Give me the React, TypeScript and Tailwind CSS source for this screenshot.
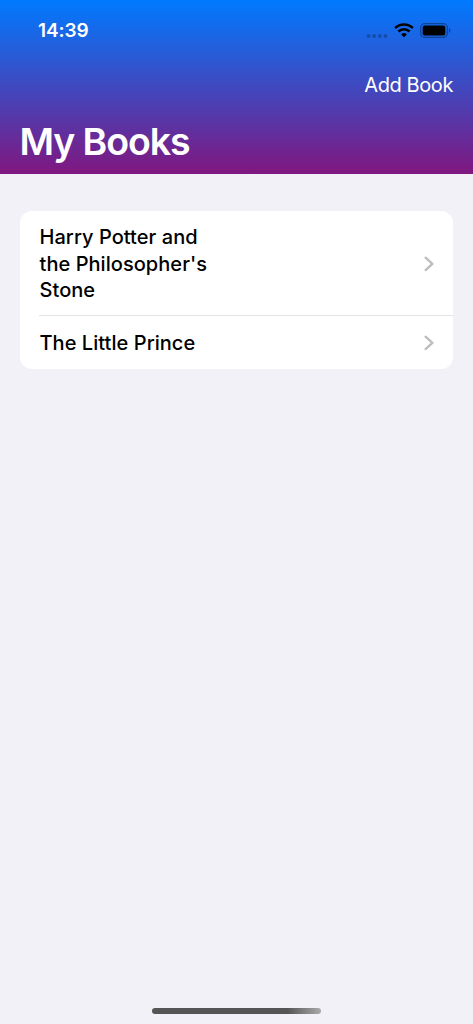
export default function App() {
  return (
    <div className="flex h-[1024px] w-full flex-col overflow-hidden bg-[#f2f1f7] font-['Inter',sans-serif]">
      <header className="flex h-[174px] flex-col bg-linear-to-b/srgb from-[#007aff] to-[#80177f] text-white">
        <div className="flex h-[61px] items-center justify-between pr-[22px] pl-[38px]">
          <span className="text-[19px] leading-none font-semibold tracking-[-0.1px]">14:39</span>
          <div className="flex items-center">
            <svg width="22" height="6" viewBox="0 0 22 6" className="mt-[10px] mr-[6px]" fill="#000" fillOpacity="0.24">
              <circle cx="2.5" cy="3" r="2" /><circle cx="8.1" cy="3" r="2" /><circle cx="13.8" cy="3" r="2" /><circle cx="19.4" cy="3" r="2" />
            </svg>
            <svg width="20" height="15" viewBox="0 0 20 15" fill="none" stroke="#000" strokeWidth="2.6">
              <path d="M1.2 5a12.8 12.8 0 0 1 17.6 0" /><path d="M4.4 8.5a8 8 0 0 1 11.2 0" /><path d="M10 14.2 7.2 11.4a4 4 0 0 1 5.6 0Z" fill="#000" stroke="none" />
            </svg>
            <svg width="31" height="15" viewBox="0 0 31 15" className="ml-[6px]">
              <rect x=".7" y=".7" width="26.6" height="13.6" rx="4" fill="none" stroke="#000" strokeOpacity=".36" strokeWidth="1.2" /><rect x="2.7" y="2.6" width="22.6" height="9.8" rx="2" /><path d="M29 5v5c1.8-.8 1.8-4.2 0-5Z" fillOpacity=".42" />
            </svg>
          </div>
        </div>
        <div className="flex h-[46px] items-center justify-end pt-0.5 pr-5">
          <button className="text-[20px] leading-none tracking-[-0.4px]">Add Book</button>
        </div>
        <h1 className="pt-[14px] pl-[19.5px] text-[37.5px] leading-[41px] font-semibold tracking-[-1.1px]">My Books</h1>
      </header>
      <main className="px-5 pt-[37px]">
        <ul className="overflow-hidden rounded-[12px] bg-white text-[20px] leading-[26.6px] font-medium text-black">
          <li className="flex h-[104px] items-center justify-between pt-px pr-[19px] pl-[19.5px]">
            <span className="pt-[1px] tracking-[0.05px]">Harry Potter and<br />the Philosopher's<br />Stone</span>
            <Chevron />
          </li>
          <li className="ml-[19px] flex h-[54px] items-center justify-between border-t border-[#e3e3e5] pr-[19px] pl-[.5px]">
            <span className="pt-[2px] tracking-[0.05px]">The Little Prince</span>
            <Chevron />
          </li>
        </ul>
      </main>
      <div className="mt-auto mb-[10px] h-[6px] w-[169px] self-center rounded-full bg-linear-to-r/srgb from-[#555] from-80% to-[#aaa]" />
    </div>
  );
}

function Chevron() {
  return (
    <svg width="10" height="16" viewBox="0 0 10 16" fill="none" stroke="#bdbdbf" strokeWidth="2.3" strokeLinecap="round" strokeLinejoin="round">
      <path d="m1.6 1.7 6.8 6.2-6.8 6.2" />
    </svg>
  );
}
